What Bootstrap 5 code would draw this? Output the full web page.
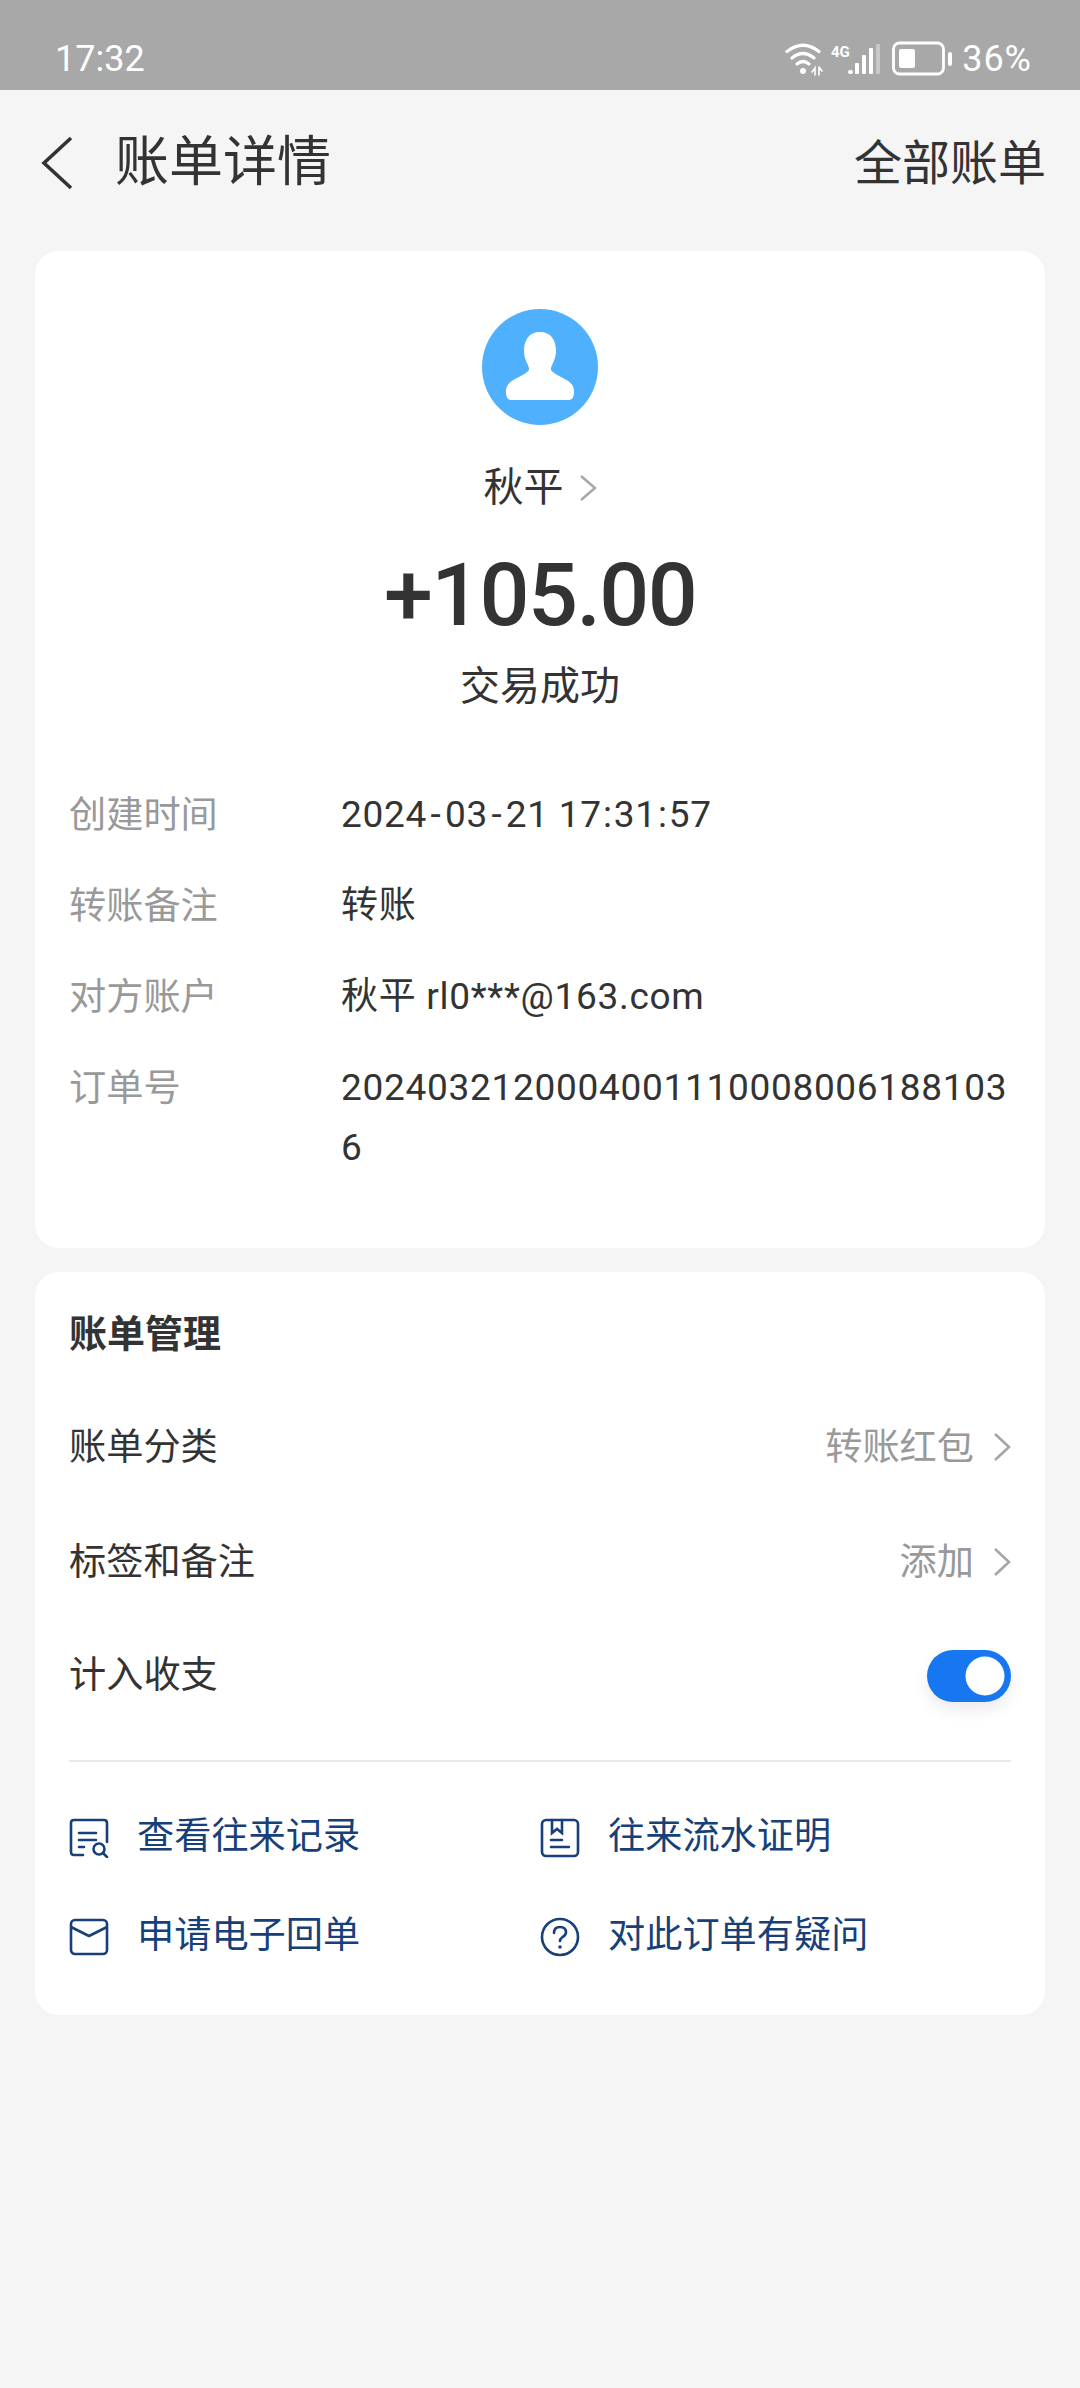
<!DOCTYPE html>
<html lang="zh-CN">
<head>
    <meta charset="UTF-8">
    <meta name="viewport" content="width=device-width, initial-scale=1">
    <title>账单详情</title>
    <link rel="stylesheet" href="https://cdn.jsdelivr.net/npm/bootstrap@5.3.0/dist/css/bootstrap.min.css">
    <style>
        body { background: #f5f5f5; color: #333; min-height: 2388px; font-family: Roboto, "Noto Sans CJK SC", sans-serif; font-size: 37.2px; line-height: 1; }
        .status-bar { height: 90px; background: #a8a8a8; color: #fff; padding: 28px 48px 0 55px; font-size: 36px; }
        .battery-text { letter-spacing: 1px; }
        .top-bar { height: 161px; padding: 0 34px 14px 40px; }
        .page-title { font-size: 54px; font-weight: 400; margin: 0 0 0 38px; }
        .all-bills { font-size: 48px; }
        .sheet { background: #fff; border-radius: 24px; margin: 0 35px; }
        .sheet-one { height: 997px; padding-top: 58px; }
        .sheet-two { height: 743px; margin-top: 24px; padding: 0 34px; }
        .avatar { width: 116px; height: 116px; border-radius: 50%; background: #4fb0fe; }
        .party { font-size: 40px; margin-top: 39px; height: 48px; gap: 15px; }
        .amount { font-size: 88px; font-weight: 500; margin-top: 31px; height: 104px; line-height: 104px; letter-spacing: -1.6px; }
        .result { font-size: 40px; margin-top: 15px; height: 50px; line-height: 50px; }
        .detail-list { margin-top: 65px; padding: 0 34px; }
        .detail-row { min-height: 91px; padding-top: 8px; line-height: 60px; }
        .detail-label { width: 272px; color: #999; flex-shrink: 0; }
        .detail-value { word-break: break-all; width: 670px; font-size: 37px; letter-spacing: .7px; }
        .date-dash { margin: 0 3.5px; }
        .date-colon { margin: 0 1.2px; }
        .manage-title { font-size: 38px; font-weight: 700; padding-top: 40px; height: 118px; margin: 0; }
        .manage-row { height: 115px; }
        .manage-row-short { height: 112px; }
        .muted-value { color: #999; gap: 19px; }
        .form-switch .switch-blue { width: 84px; height: 52px; margin: 0; background-color: #1677f0; border: 0; box-shadow: 0 8px 16px rgba(0, 0, 0, .08); }
        .form-switch.switch-wrap { padding: 0; min-height: 0; margin: 0; }
        .split-line { border-top: 2px solid #e9e9e9; margin-top: 28px; padding-top: 56px; }
        .link-item { height: 99px; color: #173f7a; gap: 28px; }
        .link-col-one { width: 471px; }
    </style>
</head>
<body>

<div class="status-bar d-flex justify-content-between align-items-center">
    <span>17:32</span>
    <div class="d-flex align-items-center">
        <svg width="46" height="34" viewBox="0 0 46 34" fill="none" stroke="#fff" stroke-linecap="round">
            <path d="M2 9.500Q18 -3 34 9.500" stroke-width="3.200"/>
            <path d="M7 16Q18 7 29 16" stroke-width="3.200"/>
            <path d="M12 22Q18 17 24 22" stroke-width="3.200"/>
            <circle cx="18" cy="29" r="3" fill="#fff" stroke="none"/>
            <path d="M27 30L30 26V33M34 25V33M34 25L37 29" stroke-width="1.600"/>
        </svg>
        <svg width="61" height="34" viewBox="0 0 61 34">
            <text x="0" y="15" fill="#fff" font-family="Roboto" font-size="15" font-weight="700">4G</text>
            <rect x="17" y="28" width="5" height="4" rx="2" fill="#fff"/>
            <rect x="24" y="21" width="4" height="11" rx="1" fill="#fff"/>
            <rect x="31" y="13" width="4" height="19" rx="1" fill="#fff"/>
            <rect x="38" y="6" width="4" height="26" rx="1" fill="#fff"/>
            <rect x="45" y="2" width="4" height="30" rx="1" fill="#c9c9c9"/>
        </svg>
        <svg width="70" height="36" viewBox="0 0 70 36">
            <rect x="1.500" y="2" width="50" height="31" rx="6" fill="none" stroke="#fff" stroke-width="2.800"/>
            <rect x="7" y="8" width="16" height="19" rx="2" fill="#fff"/>
            <rect x="56" y="11" width="4" height="14" rx="2" fill="#fff"/>
        </svg>
        <span class="battery-text">36%</span>
    </div>
</div>

<div class="top-bar d-flex justify-content-between align-items-center">
    <div class="d-flex align-items-center">
        <svg width="37" height="56" viewBox="0 0 37 56" fill="none" stroke="#333" stroke-width="3.600"><path d="M31 3L4 28L31 53"/></svg>
        <h1 class="page-title">账单详情</h1>
    </div>
    <span class="all-bills">全部账单</span>
</div>

<div class="sheet sheet-one">
    <div class="d-flex justify-content-center">
        <div class="avatar d-flex align-items-center justify-content-center">
            <svg width="72" height="72" viewBox="0 0 72 72" fill="#fff"><path d="M36 1C47 1 52 9 52 20C52 28 48 33 47 37C46 41 52 43 57 46C65 50 70 53 70 60C70 67 68 69 64 69H8C4 69 2 67 2 60C2 53 7 50 15 46C20 43 26 41 25 37C24 33 20 28 20 20C20 9 25 1 36 1Z"/></svg>
        </div>
    </div>
    <div class="party d-flex justify-content-center align-items-center">
        <span>秋平</span>
        <svg width="18" height="28" viewBox="0 0 18 28" fill="none" stroke="#a6a6a6" stroke-width="2.400"><path d="M2 2L16 14L2 26"/></svg>
    </div>
    <div class="amount text-center">+105.00</div>
    <div class="result text-center">交易成功</div>
    <div class="detail-list">
        <div class="detail-row d-flex"><span class="detail-label">创建时间</span><span class="detail-value">2024<span class="date-dash">-</span>03<span class="date-dash">-</span>21 17<span class="date-colon">:</span>31<span class="date-colon">:</span>57</span></div>
        <div class="detail-row d-flex"><span class="detail-label">转账备注</span><span class="detail-value">转账</span></div>
        <div class="detail-row d-flex"><span class="detail-label">对方账户</span><span class="detail-value">秋平 rl0***@163.com</span></div>
        <div class="detail-row d-flex"><span class="detail-label">订单号</span><span class="detail-value">20240321200040011100080061881036</span></div>
    </div>
</div>

<div class="sheet sheet-two">
    <h2 class="manage-title">账单管理</h2>
    <div class="manage-row d-flex justify-content-between align-items-center">
        <span>账单分类</span>
        <span class="muted-value d-flex align-items-center">转账红包
            <svg width="18" height="30" viewBox="0 0 18 30" fill="none" stroke="#a6a6a6" stroke-width="2.600"><path d="M2 2L16 15L2 28"/></svg></span>
    </div>
    <div class="manage-row d-flex justify-content-between align-items-center">
        <span>标签和备注</span>
        <span class="muted-value d-flex align-items-center">添加
            <svg width="18" height="30" viewBox="0 0 18 30" fill="none" stroke="#a6a6a6" stroke-width="2.600"><path d="M2 2L16 15L2 28"/></svg></span>
    </div>
    <div class="manage-row-short d-flex justify-content-between align-items-center">
        <span>计入收支</span>
        <div class="form-check form-switch switch-wrap"><input class="form-check-input switch-blue" type="checkbox" role="switch" checked aria-label="计入收支"></div>
    </div>
    <div class="split-line">
        <div class="d-flex">
            <div class="link-col-one">
                <div class="link-item d-flex align-items-start">
                    <svg width="40" height="40" viewBox="0 0 40 40" fill="none" stroke="#173f7a" stroke-width="2.600" stroke-linecap="round"><path d="M14 37H5Q2 37 2 34V5Q2 2 5 2H35Q38 2 38 5V24"/><path d="M10 15H27M10 22H27M10 29H15"/><circle cx="30" cy="31" r="5.500"/><path d="M34 35L38 39"/></svg>
                    <span>查看往来记录</span>
                </div>
                <div class="link-item d-flex align-items-start">
                    <svg width="40" height="40" viewBox="0 0 40 40" fill="none" stroke="#173f7a" stroke-width="2.600" stroke-linejoin="round"><rect x="2" y="3" width="36" height="34" rx="4"/><path d="M2 10L20 19L38 10"/></svg>
                    <span>申请电子回单</span>
                </div>
            </div>
            <div>
                <div class="link-item d-flex align-items-start">
                    <svg width="40" height="40" viewBox="0 0 40 40" fill="none" stroke="#173f7a" stroke-width="2.600" stroke-linecap="round"><rect x="2" y="2" width="36" height="36" rx="4"/><path d="M12 2V15L17 11L22 15V2M11 22H22M11 29H29"/></svg>
                    <span>往来流水证明</span>
                </div>
                <div class="link-item d-flex align-items-start">
                    <svg width="40" height="40" viewBox="0 0 40 40" fill="none" stroke="#173f7a" stroke-width="2.600" stroke-linecap="round"><circle cx="20" cy="20" r="18"/><path d="M14 16Q14 10 20 10Q26 10 26 15.500Q26 18 22 20.500Q20 22 20 24"/><circle cx="20" cy="30" r="1.800" fill="#173f7a" stroke="none"/></svg>
                    <span>对此订单有疑问</span>
                </div>
            </div>
        </div>
    </div>
</div>

<script src="https://cdn.jsdelivr.net/npm/bootstrap@5.3.0/dist/js/bootstrap.bundle.min.js"></script>
</body>
</html>
